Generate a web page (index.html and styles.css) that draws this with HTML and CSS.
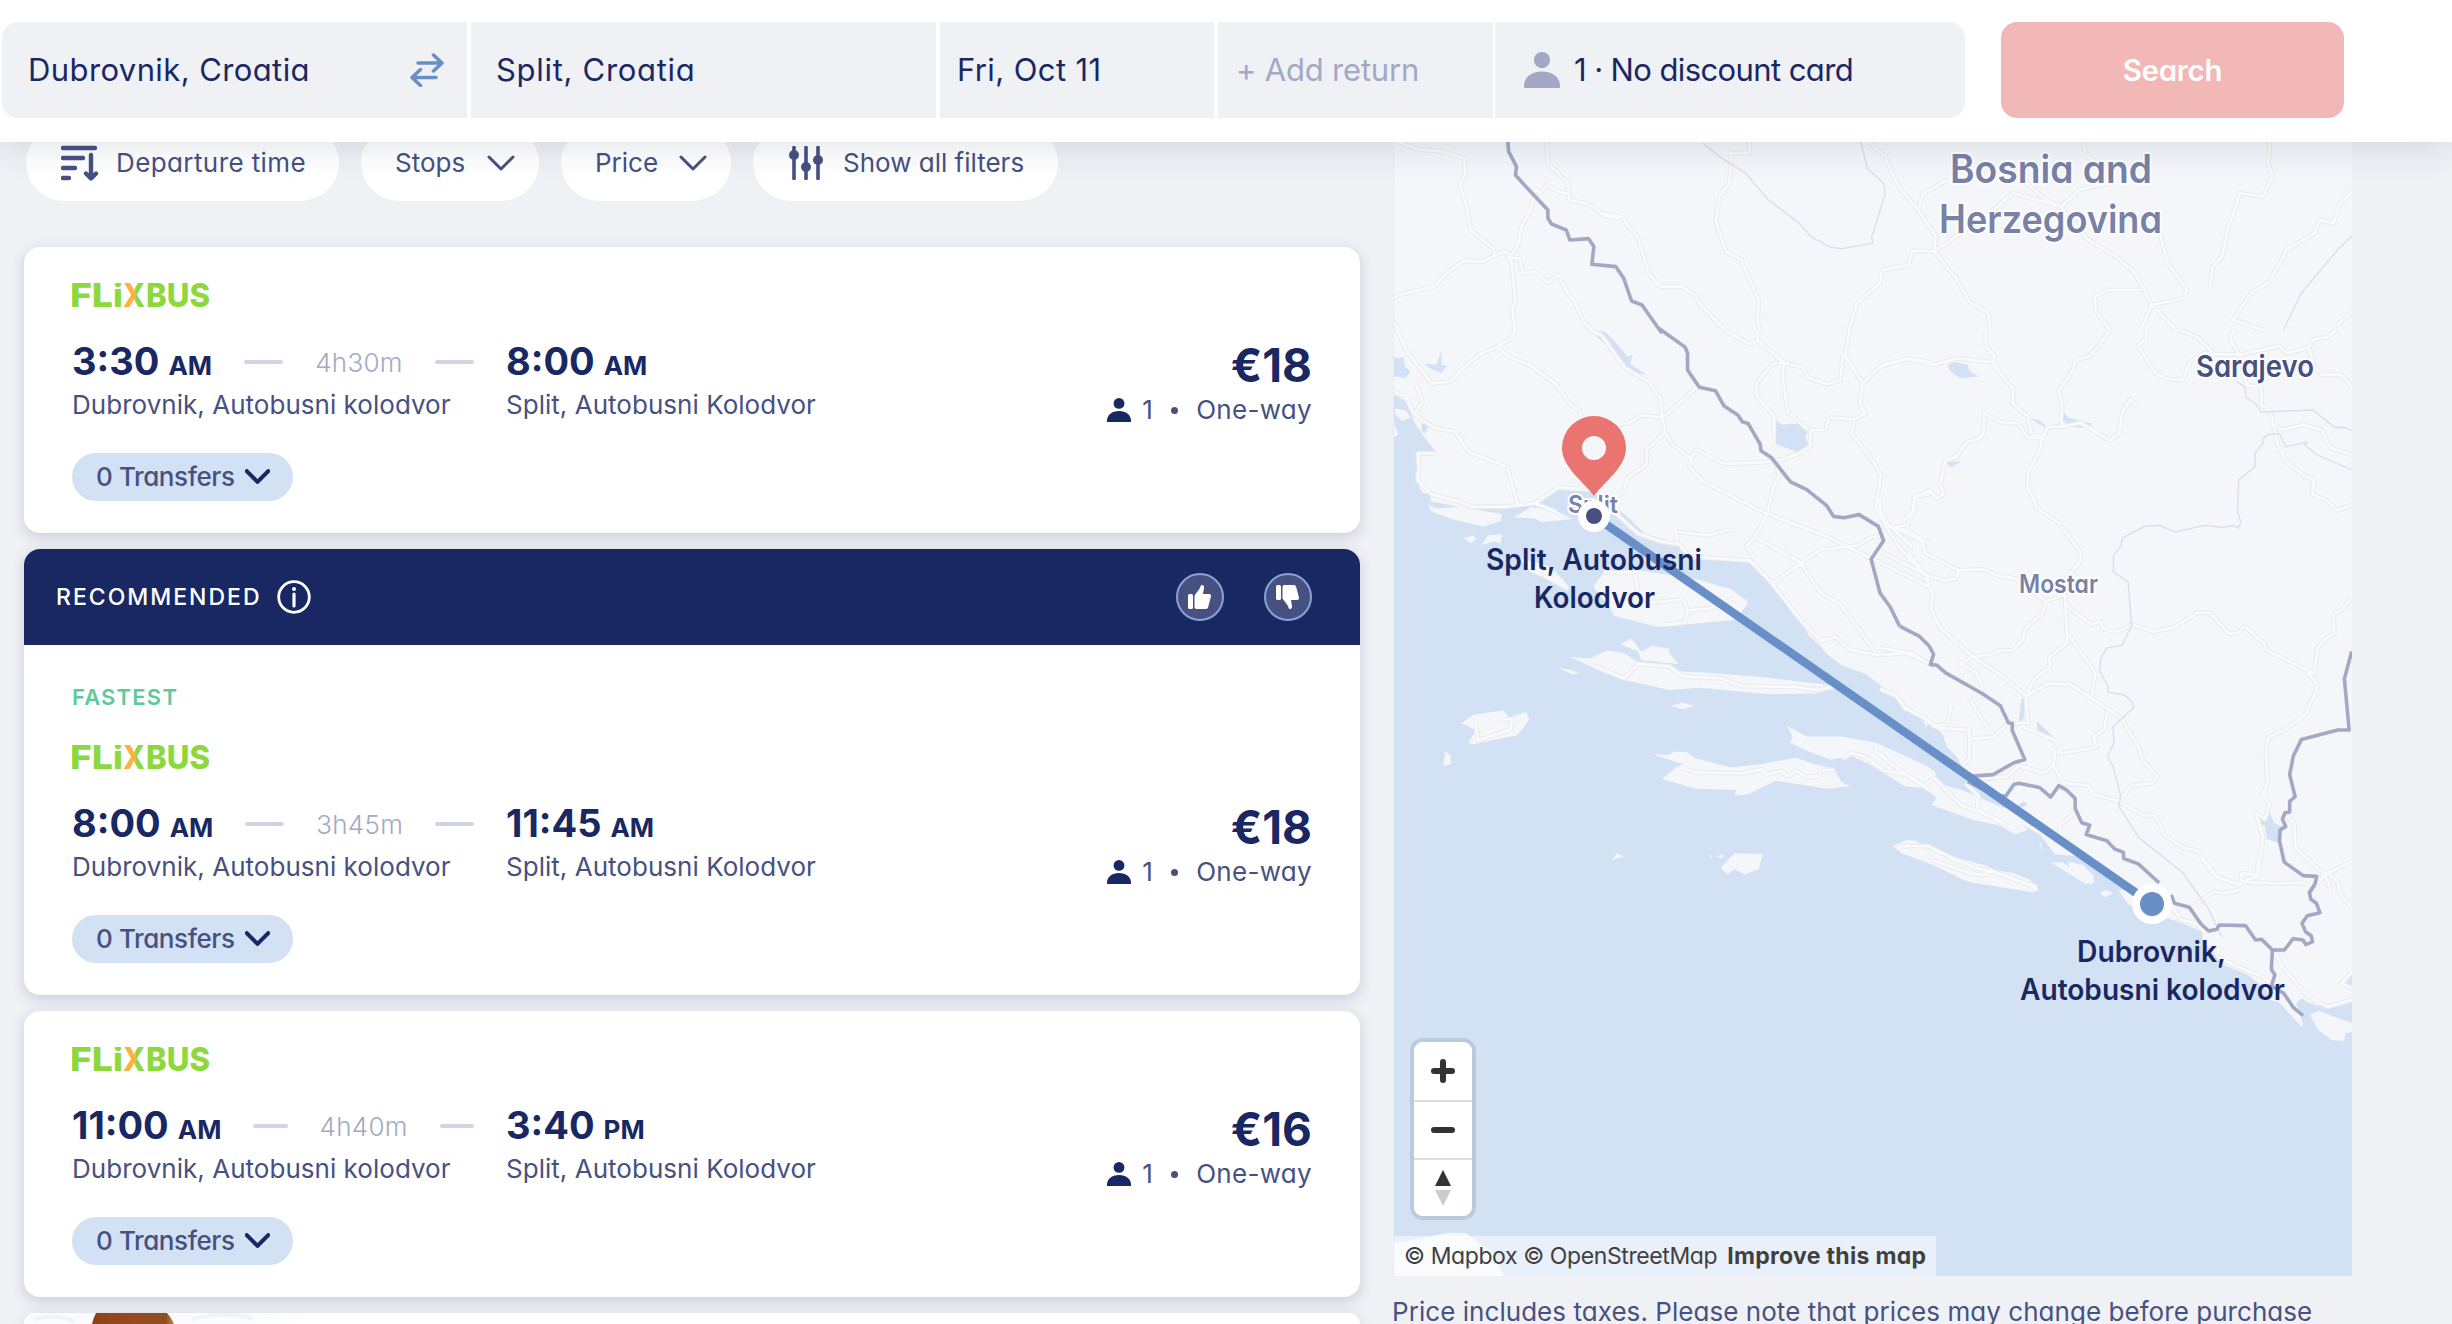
FILE: index.html
```html
<!DOCTYPE html>
<html lang="en">
<head>
<meta charset="utf-8">
<title>Dubrovnik to Split</title>
<link rel="stylesheet" href="styles.css">
</head>
<body>
<svg class="sprite" width="0" height="0" aria-hidden="true">
  <defs>
    <linearGradient id="x-fill" x1="0" x2="1" y1="0" y2="0">
      <stop offset=".58" stop-color="#fbb040"/><stop offset=".58" stop-color="#8dd83c"/>
    </linearGradient>
    <symbol id="flixbus" viewBox="0 0 137 24">
      <g font-family="Inter, sans-serif" font-weight="800" font-size="33" fill="#8dd83c">
        <text x="-2" y="24" textLength="43" lengthAdjust="spacingAndGlyphs">FL</text>
        <text x="41" y="24" textLength="10" lengthAdjust="spacingAndGlyphs">i</text>
        <text x="51" y="24" textLength="22" lengthAdjust="spacingAndGlyphs" fill="url(#x-fill)">X</text>
        <text x="74" y="24" textLength="64" lengthAdjust="spacingAndGlyphs">BUS</text>
      </g>
    </symbol>
    <symbol id="person" viewBox="0 0 24 24">
      <circle cx="12" cy="5.4" r="5.4"/><path d="M0 24v-1.500C0 17 5 13 12 13s12 4 12 9.500V24z"/>
    </symbol>
    <symbol id="chevron" viewBox="0 0 28 16"><path d="M2 2l12 12L26 2" fill="none" stroke="currentColor" stroke-linecap="round" stroke-linejoin="round"/></symbol>
    <symbol id="thumb" viewBox="0 0 24 24">
      <rect x="0" y="9" width="5" height="15" rx="1.500"/>
      <path d="M6.500 10.500 12 3c.5-1.500.6-3 2-3 1.800 0 2.300 1.600 1.900 3.500L15 9h6c1.600 0 2.300 1.200 1.900 2.700l-2.700 10.200C19.800 23.400 19 24 17.600 24H8.500c-1.200 0-2-.8-2-2z"/>
    </symbol>
  </defs>
</svg>

<header class="searchbar">
  <div class="field field-from"><span>Dubrovnik, Croatia</span>
    <svg class="swap" viewBox="0 0 34 34"><path d="M8 10h24M23.500 2l8.500 8-8.500 8M26 24.500H2M10.500 16.500l-8.500 8 8.500 8"/></svg>
  </div>
  <div class="field field-to"><span>Split, Croatia</span></div>
  <div class="field field-date"><span>Fri, Oct 11</span></div>
  <div class="field field-return"><span>+ Add return</span></div>
  <div class="field field-pax"><svg class="pax-icon"><use href="#person"/></svg><span>1 · No discount card</span></div>
  <button class="search">Search</button>
</header>

<main class="page">
  <section class="results">
    <nav class="filters">
      <div class="chip chip-sort">
        <svg class="sort-icon" viewBox="0 0 38 36"><path d="M2 3h32M2 13h20M2 23h12M2 33h6M30 10v23M25 28.500l5 5 5-5"/></svg>
        <span>Departure time</span>
      </div>
      <div class="chip chip-stops"><span>Stops</span><svg class="chip-chevron"><use href="#chevron"/></svg></div>
      <div class="chip chip-price"><span>Price</span><svg class="chip-chevron"><use href="#chevron"/></svg></div>
      <div class="chip chip-all">
        <svg class="tune-icon" viewBox="0 0 34 34"><path d="M5 1.500v31M17 1.500v31M29 1.500v31"/><circle cx="5" cy="9" r="5"/><circle cx="17" cy="21" r="5"/><circle cx="29" cy="14" r="5"/></svg>
        <span>Show all filters</span>
      </div>
    </nav>

    <article class="card">
      <div class="card-body">
        <svg class="logo"><use href="#flixbus"/></svg>
        <div class="trip">
          <div class="leg leg-out">
            <div class="timeline"><span class="time">3:30 <small>AM</small></span><i class="dash"></i><span class="duration">4h30m</span><i class="dash"></i></div>
            <div class="station">Dubrovnik, Autobusni kolodvor</div>
          </div>
          <div class="leg">
            <div class="timeline"><span class="time">8:00 <small>AM</small></span></div>
            <div class="station">Split, Autobusni Kolodvor</div>
          </div>
          <div class="fare">
            <div class="price">€18</div>
            <div class="kind"><svg class="kind-icon"><use href="#person"/></svg><span class="count">1</span><i class="bullet"></i><span>One-way</span></div>
          </div>
        </div>
        <button class="transfers"><span>0 Transfers</span><svg class="pill-chevron"><use href="#chevron"/></svg></button>
      </div>
    </article>

    <article class="card">
      <div class="ribbon">
        <span>RECOMMENDED</span>
        <svg class="info" viewBox="0 0 34 34"><circle cx="17" cy="17" r="15.300" fill="none" stroke="#fff" stroke-width="2.800"/><path d="M17 14v12" stroke="#fff" stroke-width="3.200" stroke-linecap="round"/><circle cx="17" cy="9" r="2" fill="#fff"/></svg>
        <div class="votes">
          <span class="vote"><svg><use href="#thumb"/></svg></span>
          <span class="vote vote-down"><svg><use href="#thumb"/></svg></span>
        </div>
      </div>
      <div class="card-body card-body-tagged">
        <div class="tag">FASTEST</div>
        <svg class="logo"><use href="#flixbus"/></svg>
        <div class="trip">
          <div class="leg leg-out">
            <div class="timeline"><span class="time">8:00 <small>AM</small></span><i class="dash"></i><span class="duration">3h45m</span><i class="dash"></i></div>
            <div class="station">Dubrovnik, Autobusni kolodvor</div>
          </div>
          <div class="leg">
            <div class="timeline"><span class="time">11:45 <small>AM</small></span></div>
            <div class="station">Split, Autobusni Kolodvor</div>
          </div>
          <div class="fare">
            <div class="price">€18</div>
            <div class="kind"><svg class="kind-icon"><use href="#person"/></svg><span class="count">1</span><i class="bullet"></i><span>One-way</span></div>
          </div>
        </div>
        <button class="transfers"><span>0 Transfers</span><svg class="pill-chevron"><use href="#chevron"/></svg></button>
      </div>
    </article>

    <article class="card">
      <div class="card-body">
        <svg class="logo"><use href="#flixbus"/></svg>
        <div class="trip">
          <div class="leg leg-out">
            <div class="timeline"><span class="time">11:00 <small>AM</small></span><i class="dash"></i><span class="duration">4h40m</span><i class="dash"></i></div>
            <div class="station">Dubrovnik, Autobusni kolodvor</div>
          </div>
          <div class="leg">
            <div class="timeline"><span class="time">3:40 <small>PM</small></span></div>
            <div class="station">Split, Autobusni Kolodvor</div>
          </div>
          <div class="fare">
            <div class="price">€16</div>
            <div class="kind"><svg class="kind-icon"><use href="#person"/></svg><span class="count">1</span><i class="bullet"></i><span>One-way</span></div>
          </div>
        </div>
        <button class="transfers"><span>0 Transfers</span><svg class="pill-chevron"><use href="#chevron"/></svg></button>
      </div>
    </article>

    <article class="card promo">
      <svg class="promo-photo" viewBox="0 0 278 11">
        <defs><linearGradient id="hair" x1="0" x2="1"><stop offset="0" stop-color="#8f4214"/><stop offset=".5" stop-color="#984a1d"/><stop offset=".9" stop-color="#8d4f20"/><stop offset="1" stop-color="#b98a4d"/></linearGradient></defs>
        <path d="M10 6q20-6 40 2M168 6q30-8 60-1" stroke="#f1f3f6" stroke-width="4" fill="none"/>
        <path d="M72 0Q69 6 68 11H150Q147 4 143 0z" fill="url(#hair)"/>
      </svg>
    </article>
  </section>

  <aside class="side">
    <div class="map">
      <svg class="map-canvas" viewBox="1393 142 959 1134" width="959" height="1134">
        <defs>
          <g id="roads">
            <g transform="scale(.3333) translate(2400 0) scale(1.569 1)">
              <path d="M1145 426L1180 448 1230 455 1270 475 1273 515 1262 555 1275 620 1282 690 1325 745 1330 765 1305 785 1270 782 1240 815 1212 860 1145 885 1132 900"/>
              <path d="M1428 426L1430 490 1468 548 1472 600 1508 612 1540 648 1568 655"/>
              <path d="M1405 565L1400 620 1380 680 1372 740 1355 775 1376 775 1383 820 1405 815 1430 848 1450 825 1470 885 1480 900 1500 970 1515 990"/>
              <path d="M1330 765L1350 755 1360 780 1368 900 1362 930 1368 1000"/><path d="M1405 565L1415 580 1428 555 1450 575 1470 582"/>
              <path d="M1132 960L1145 990"/>
            </g>
            <g transform="translate(1600 0) scale(.5434 .3333)">
              <path d="M0 640L40 650 70 715 90 820 110 860 150 860 175 885 185 915 230 990"/>
              <path d="M275 426V460H242L238 550 220 590 213 665 232 755 260 780 292 900 290 970 295 990"/>
              <path d="M495 426L525 470 540 530 550 560 585 630 618 710 615 755"/>
              <path d="M585 630L595 580 640 540"/>
              <path d="M890 426L895 470 930 500 935 550 880 570 870 590 848 620 760 580 720 635 615 755 575 752 568 795 520 810 515 850 473 910 458 990"/>
              <path d="M780 540L820 600 848 620 895 715 950 770 985 820 1015 915 1060 990"/>
              <path d="M615 755L655 835 680 905 715 940 718 990"/>
              <path d="M995 870H935L910 890 912 930 938 990"/>
              <path d="M1232 426L1230 490 1238 530 1220 590 1178 580 1155 690 1145 770 1128 800 1122 870M1030 700L1045 790 1080 870 1075 895 1015 915 998 980"/>
              <path d="M1384 575L1360 615 1350 670 1325 660 1315 700 1262 750 1258 770 1230 850 1200 875 1165 960 1220 990"/>
              <path d="M1384 935L1360 970 1362 990"/>
            </g>
            <g transform="translate(1390 330) scale(.3444 .3571)">
              <path d="M20 0L55 70 90 110 120 150 175 145 215 105 260 68 310 48 350 25 365 0M310 48L350 78 400 95 480 150 525 210 550 225 555 245"/>
              <path d="M12 175L45 185 70 235 130 275 190 285 225 340 340 383 372 490"/><path d="M70 235L95 200 75 150M205 300L215 285"/>
              <path d="M580 0L615 15 680 105 750 145 785 190 790 245 800 285 745 335 745 375 690 415 680 450 640 480"/>
              <path d="M660 265L690 262 730 238 790 245 835 210 885 165"/>
              <path d="M800 285L820 320 875 360 870 385 910 425 1095 515 1260 575 1400 640 1568 720"/>
              <path d="M875 360L890 335 970 375 1090 370 1140 362 1190 345 1220 325 1222 280 1265 280 1275 245 1350 250 1380 235 1365 205 1372 150 1320 70 1335 0"/>
              <path d="M970 0L1045 40 1068 30 1145 92 1110 95 1065 150 1065 185 1115 240V300M1068 0V30M1145 92L1200 105 1215 135 1270 152 1308 140 1315 70M1372 150L1430 97 1505 80 1568 90"/>
              <path d="M1145 92L1140 130 1155 230 1215 280M1350 250L1340 290 1405 370 1425 410 1410 495 1440 550 1480 610 1568 700M1440 550L1500 560 1568 600"/>
              <path d="M1568 460L1525 465 1518 505 1495 530"/>
              <path d="M1120 370L1130 410 1115 435 1095 515 1060 580 1035 605 1060 640"/><path d="M830 565L925 575 985 560M830 565L835 595 870 635 1045 645 1110 710 1190 810 1250 870 1295 860 1335 895 1410 910 1500 905 1568 935"/>
              <path d="M1110 710L1190 655 1250 615 1360 603 1400 580 1440 575M1060 580L1190 650 1250 735 1310 770 1385 870 1410 905"/>
              <path d="M80 345H130M80 345L85 380 80 420 120 460 200 480 240 495 330 495 420 485 490 440 550 445M420 485L485 510"/>
              <path d="M640 500L720 570 790 593 835 600"/>
              <path d="M620 680L710 678 720 735M740 765L850 755 865 785 855 820 795 825M865 785L930 780 1000 750"/>
              <path d="M590 940L680 975 720 935 810 942 850 970 960 975 1020 997 1180 1000 1240 1008 1310 995"/>
              <path d="M250 1110L255 1150 350 1118 355 1090 325 1090"/>
              <path d="M850 1225L880 1238 1020 1242 1080 1230 1090 1245 1140 1235 1155 1250 1180 1235 1210 1252 1245 1250 1250 1235 1290 1230"/>
              <path d="M1315 1200L1340 1185 1380 1195 1435 1235 1500 1245 1568 1290M1410 1158V1180L1440 1200"/>
            </g>
            <g transform="translate(1880 330) scale(.3648 .3571)">
              <path d="M0 103L75 80 150 97 210 80 310 90 315 75 290 45V0M310 95L365 165V208L405 240 415 290 445 303 460 272 505 270 550 260 630 310 655 290 665 230 685 195 705 210"/>
              <path d="M630 0L600 45 572 75 535 85 530 110 490 170 500 215 495 255 510 270"/>
              <path d="M285 232L330 258 378 262 405 300 445 303 440 335 405 400V440L432 500 490 540 552 625 545 655 505 700 512 850"/>
              <path d="M285 232L285 280 275 303 235 315 210 355 180 365 165 430 175 460 157 470 135 450 93 470 95 500 75 545 40 553"/>
              <path d="M0 470V500L20 540 85 605 80 630 125 685 178 703 210 695 215 673 280 670 330 690 370 695 455 760 510 740M0 620L125 685M40 553L115 590 125 625 215 673"/>
              <path d="M125 690L145 740 140 780 165 835 255 915 330 965 400 1025 460 990 520 992 580 1030 590 960 515 850 510 880 465 915V945L425 975 400 1025 405 1100 350 1103 310 1140 250 1145"/>
              <path d="M455 760L445 795 400 835 390 870 365 897 330 898 300 910 255 915 220 935 265 960 280 1000"/>
              <path d="M512 770L540 795 580 825 605 815 610 835 645 847 690 825 750 845 805 833 870 792H905L955 850 980 850 1000 830 1055 880 1060 897 1190 962 1200 890 1220 865 1245 850 1243 795 1270 780 1293 750"/>
              <path d="M1170 955L1200 997 1168 1075 1110 1120 1065 1140 1058 1180 1062 1265 1050 1300 1068 1330 1055 1370 1030 1350 1050 1420 1035 1530 990 1545"/>
              <path d="M580 1030L625 1062 615 1118 585 1140 595 1168 500 1185 480 1180 475 1220 450 1240 380 1220 350 1250 260 1260"/>
              <path d="M625 1062L660 1085 710 1170 720 1205 760 1250 745 1270 690 1275 655 1320 585 1300 570 1275 505 1270 475 1220M390 1110L480 1150 500 1185"/>
              <path d="M655 1320L720 1358 755 1360 780 1415 830 1450 870 1458 920 1530 985 1555M990 1545L1080 1550 1160 1548"/>
              <path d="M730 0V20L708 45 755 120 785 137 830 140 850 90 890 65 985 70 1095 45 1115 65 1175 50 1190 25 1225 20 1250 0M820 0L870 20 920 70M970 0L960 25 985 70 1005 155 1045 160V210L1070 225 1090 320 1115 370 1165 410 1190 420 1185 460 1220 475 1255 505 1293 490M1175 50L1190 100 1210 125 1265 125 1293 160"/>
              <path d="M1085 270L1105 280 1160 265 1210 280 1235 330 1293 350M1115 1360L1135 1380 1140 1450 1190 1500 1220 1525 1293 1488M1220 1525L1195 1555M1220 1525L1235 1568"/>
              <path d="M0 890L85 905 135 935M0 1005L45 1025 70 1060 120 1085 150 1110 185 1105 195 1050M160 1115L245 1120V1200L230 1215M245 1025L260 1060 300 1120M0 1190L50 1230 120 1275 150 1255 220 1330 300 1360 340 1385"/>
              <path d="M235 1270L270 1305 265 1345 330 1375M540 1345L515 1370 495 1380 490 1410M60 1445H130L200 1480 260 1505 330 1525 430 1560"/>
            </g>
            <g transform="translate(1900 860) scale(.352 .3333)">
              <path d="M90 0L200 40 240 45 255 30 370 75 390 90M860 0L900 50 965 75 970 40 1015 45 1018 0M840 135L890 95 920 100 965 90"/>
              <path d="M1215 35L1245 70 1250 100 1284 145M1065 275L1085 320 1160 410 1215 440 1284 420M1284 335L1255 370 1284 385M900 290L960 320 1030 350 1065 385M780 150L800 180 840 190 860 210"/>
            </g>
          </g>
        </defs>
        <rect x="1393" y="142" width="959" height="1134" fill="#f4f6fa"/>
        <g fill="#d2e1f3">
          <g transform="translate(1390 330) scale(.3444 .3571)">
            <path d="M0 172L12 178 45 200 62 235 72 262 100 300 134 342 76 342 85 380 78 420 92 455 115 460 120 480 200 495 240 500 290 488 345 498 420 483 480 448 550 450 592 455 680 515 740 570 835 597 870 640 1040 648 1110 710 1150 770 1195 815 1215 855 1255 890 1265 905 1310 938 1385 965 1430 1000 1480 1030 1500 1065 1555 1118 1568 1090V2700H0z"/>
            <path d="M0 70L25 80 38 75 45 105 60 115 45 135 20 130 0 138zM100 95L135 97 148 60 150 97 165 100 150 120 120 110zM580 0L625 5 660 40 690 75 705 68 697 95 745 125 700 120 670 80zM1120 250L1135 265 1190 262 1218 278 1205 300 1220 330 1185 343 1150 330 1120 320z"/>
            <path d="M92 262l20 3-8 25-12-8z"/>
          </g>
          <g transform="translate(1880 330) scale(.3648 .3571)">
            <path d="M0 1000L40 1020 70 1065 110 1080 133 1125V1085L145 1110 170 1130 185 1170 210 1195 240 1250 300 1290 365 1340 395 1320 405 1330 370 1345 330 1335 230 1290 160 1270 150 1235 0 1162z"/>
            <path d="M0 1238L70 1265 100 1285 120 1280 155 1310 140 1330 250 1370 330 1388 370 1412 405 1400 435 1430 450 1475 440 1435 390 1385 440 1415 480 1468 560 1475 610 1520 690 1568H0z"/>
            <path d="M185 97L205 90 240 97 245 115 270 130 220 135 195 118zM408 245L440 255 455 270 495 262 500 225 515 245 580 262 575 275 500 270 460 278zM180 370L222 368 195 385zM430 1095L485 1150 432 1130zM388 1035L400 1030 395 1085 380 1100zM1035 1350L1055 1370 1065 1345 1080 1380 1100 1390 1095 1438 1060 1425 1055 1390 1035 1380z"/>
          </g>
          <g transform="translate(1900 860) scale(.352 .3333)">
            <path d="M0 0H530L600 60 650 135 760 175 810 193 858 215 860 240 900 290 910 310 990 345 1045 395 1050 420 1075 425 1145 505 1140 470 1125 430 1140 415 1165 430 1215 445 1284 425V1250H0z"/>
            <path d="M1284 345L1265 370 1284 380z"/>
          </g>
        </g>
        <g fill="#f4f6fa">
          <g transform="translate(1390 330) scale(.3444 .3571)">
            <path d="M15 220L45 225 60 245 35 255 15 235zM12 262l12 30-12 8zM110 490L140 500 200 495 325 515 322 535 270 550 180 530 120 508zM360 525L410 495 490 510 530 530 440 538 420 528zM215 583L240 575 250 585 235 597zM265 603L285 575 325 572 322 598 300 592z"/>
            <path d="M375 640L420 650 470 665 520 720 515 730 440 690 410 680zM590 720L620 680 720 672 800 685 900 700 950 715 990 725 1040 762 1030 778 1000 812 780 832 650 800 640 780z"/>
            <path d="M520 915L580 920 630 897 680 905 720 930 830 955 920 960 1080 972 1310 998 1240 1018 1100 1020 900 1002 810 1008 680 980 590 945zM670 880L700 863 730 900 760 885 810 892 812 905 838 935 730 925 720 900zM487 945L515 950 550 960 530 965z"/>
            <path d="M815 1052L850 1043 883 1053 850 1062zM207 1102L240 1078 330 1065 345 1085 395 1070 405 1090 370 1135 240 1160 228 1155 250 1120zM155 1222L160 1180 175 1190 177 1215zM760 1187L810 1190 825 1180 860 1182 890 1200 990 1225 1080 1215 1180 1198 1220 1212 1290 1230 1310 1265 1335 1278 1270 1285 1120 1262 1040 1300 1000 1305 1005 1288 890 1285 790 1258 830 1225 850 1215z"/>
            <path d="M1152 1108L1175 1120 1210 1138 1310 1138 1410 1155 1568 1225V1285L1495 1278 1390 1215 1340 1193 1280 1203 1215 1180 1160 1155 1170 1140zM960 1505L1000 1465 1083 1468 1070 1510 1030 1525 1000 1510 980 1525zM930 1465l6 10-3 10zM947 1475l18-8 3 12zM642 1485L660 1465 680 1475z"/>
          </g>
          <g transform="translate(1880 330) scale(.3648 .3571)">
            <path d="M35 1445L60 1465 150 1500 240 1545 420 1575 430 1560 290 1500 130 1455 100 1430 75 1428zM470 1492L500 1490 540 1520 515 1500 530 1490 590 1545 565 1552z"/>
          </g>
          <g transform="translate(1900 860) scale(.352 .3333)">
            <path d="M60-10L240 15 260 30 320 38 370 60 395 92 330 75 220 45 100 12zM475 5L520 15 552 50 545 75 500 40zM432 8L460 20 480 36zM568 98L585 90 605 100 583 112zM632 110L655 120 650 132zM1165 465L1190 453 1284 490V515L1265 520 1262 543 1225 540 1187 508z"/>
          </g>
          <g transform="translate(1390 860) scale(.3571 .3333)"><path d="M8 1150L90 1135 160 1118 215 1120 250 1150 290 1180 320 1250H8z"/></g>
        </g>
        <use href="#roads" class="road-casing"/>
        <use href="#roads" class="road-fill"/>
        <g class="region">
          <g transform="translate(1600 0) scale(.5434 .3333)">
            <path d="M190 430L220 470 268 520 310 600 363 665 390 712 425 742 445 746 502 730 500 712 525 580 522 550 492 505 480 426M1384 708L1360 745 1290 880 1258 990"/>
          </g>
          <g transform="translate(1880 330) scale(.3648 .3571)">
            <path d="M978 145L1002 160V188L1028 205 1045 230 1187 224 1247 273H1275L1293 282M1293 392L1195 348 1165 322 1170 314 1112 327 1095 290 1065 293 1048 305 1050 317 1028 345V383L983 420 980 510 990 540 980 555 970 547 940 553 890 547 810 565 765 547 725 550 665 582 660 605 640 632V678L680 705 690 828 663 883 622 890 605 920 602 955 625 998V1015L670 1022 690 1040 695 1058 638 1112 642 1155 624 1195 638 1220 660 1305 655 1335 710 1422 830 1520 900 1620 937 1700"/>
          </g>
        </g>
        <g class="border">
          <g transform="translate(800 0) scale(.523 .3333)"><path d="M1352 400L1355 455 1370 500 1368 525 1385 555 1430 630V655L1437 672 1465 690 1472 720 1508 716 1518 740 1514 793 1560 800 1575 835 1590 903 1610 915 1648 1000"/></g>
          <g transform="translate(1390 330) scale(.3444 .3571)"><path d="M780 -5L857 48 864 65V112L898 160 945 170 970 213 1010 238 1023 257 1040 262 1075 320 1077 338 1107 357 1163 425 1210 447 1268 492 1288 522 1318 526 1362 517 1418 550 1433 590 1397 642 1423 737 1452 775 1480 830"/></g>
          <g transform="translate(1880 330) scale(.3648 .3571)">
            <path d="M55 830L107 857 135 885 147 908 138 937 155 938 180 960 280 1018 330 1052 352 1100 363 1102 362 1120 397 1203 367 1212 310 1245 240 1250M240 1265L320 1305H345L367 1273 380 1269 437 1281 468 1308 490 1276 510 1287 535 1312V1340L553 1380 575 1387 565 1413 622 1430 643 1453 667 1463 668 1480 708 1495 765 1548M1293 900L1273 977 1286 1120H1255L1155 1147 1133 1193 1123 1245 1138 1307 1123 1320V1350L1110 1352 1103 1370 1112 1390 1097 1400 1095 1430 1108 1490 1160 1528 1197 1530 1193 1550 1178 1575"/>
          </g>
          <g transform="translate(1900 860) scale(.352 .3333)"><path d="M770 105L780 130 822 142 855 192 877 213 900 208 907 195 982 197 1010 240 1027 238 1058 270H1092L1117 236 1145 240 1153 254 1172 245 1168 227 1152 215 1142 190 1157 167 1193 158 1183 130 1167 118 1163 97 1178 75M1058 270L1055 328 1065 345 1055 378 1090 400 1118 443 1145 467"/></g>
        </g>
        <g class="place">
          <text x="1950" y="183" font-size="39" textLength="202" lengthAdjust="spacingAndGlyphs">Bosnia and</text>
          <text x="1939" y="233" font-size="39" textLength="223" lengthAdjust="spacingAndGlyphs">Herzegovina</text>
          <text x="2196" y="377" font-size="30" textLength="118" lengthAdjust="spacingAndGlyphs" fill="#465182">Sarajevo</text>
          <text x="2019" y="593" font-size="25" textLength="79" lengthAdjust="spacingAndGlyphs">Mostar</text>
          <text x="1568" y="513" font-size="24" textLength="50" lengthAdjust="spacingAndGlyphs">Split</text>
        </g>
        <path d="M1594 516L2152 904" stroke="#688fc7" stroke-width="8.500"/>
        <circle cx="1594" cy="516" r="16" fill="#fff"/><circle cx="1594" cy="516" r="8" fill="#465182"/>
        <circle cx="2152" cy="904" r="20" fill="#fff"/><circle cx="2152" cy="904" r="12" fill="#688fc7"/>
        <path fill="#e97470" fill-rule="evenodd" d="M1594 496C1582 480 1562 467 1562 448a32 32 0 0 1 64 0C1626 467 1606 480 1594 496zM1594 436a12 12 0 1 0 0 24 12 12 0 0 0 0-24z"/>
        <g class="stop-label">
          <text x="1486" y="570" textLength="216" lengthAdjust="spacingAndGlyphs">Split, Autobusni</text>
          <text x="1534" y="608" textLength="121" lengthAdjust="spacingAndGlyphs">Kolodvor</text>
          <text x="2077" y="962" textLength="149" lengthAdjust="spacingAndGlyphs">Dubrovnik,</text>
          <text x="2020" y="1000" textLength="265" lengthAdjust="spacingAndGlyphs">Autobusni kolodvor</text>
        </g>
      </svg>
      <div class="zoom">
        <button><svg viewBox="0 0 24 24"><path d="M12 3v18M3 12h18" stroke="#333" stroke-width="6" stroke-linecap="round"/></svg></button>
        <button><svg viewBox="0 0 24 24"><path d="M3 12h18" stroke="#333" stroke-width="6" stroke-linecap="round"/></svg></button>
        <button><svg class="compass" viewBox="0 0 16 36"><path d="M0 16L8 0l8 16z" fill="#333"/><path d="M0 20l8 16 8-16z" fill="#ccc"/></svg></button>
      </div>
      <div class="credits"><span>© Mapbox</span><span>© OpenStreetMap</span><b>Improve this map</b></div>
    </div>
    <p class="note">Price includes taxes. Please note that prices may change before purchase</p>
  </aside>
</main>
</body>
</html>
```
FILE: styles.css
```css
* { box-sizing: border-box; }

body {
  margin: 0;
  height: 1324px;
  overflow: hidden;
  background: #f0f1f5;
  color: #192863;
  font-family: Inter, "Liberation Sans", sans-serif;
  font-feature-settings: "cv11";
  font-size: 26px;
  white-space: nowrap;
}

button { border: 0; padding: 0; font: inherit; color: inherit; }
svg { display: block; flex: none; }
.sprite { position: absolute; }

/* Search bar */
.searchbar {
  position: relative;
  z-index: 2;
  display: flex;
  gap: 4px;
  height: 142px;
  padding: 22px 0 24px 2px;
  background: #fff;
  box-shadow: 0 0 36px rgba(25, 40, 80, .17);
}
.field {
  display: flex;
  align-items: center;
  height: 96px;
  padding-bottom: 1px;
  background: #f0f1f5;
  font-size: 31px;
}
.field-from { width: 465px; padding: 0 23px 1px 26px; justify-content: space-between; border-radius: 16px 0 0 16px; letter-spacing: .4px; }
.field-to { width: 465px; padding-left: 25px; letter-spacing: .7px; }
.field-date { width: 274px; padding-left: 17px; letter-spacing: .4px; }
.field-return { width: 275px; padding-left: 18px; color: #a3a9c4; letter-spacing: -.2px; }
.field-pax { width: 470px; margin-left: -2px; padding-left: 29px; gap: 14px; border-radius: 0 16px 16px 0; letter-spacing: -.6px; }
.pax-icon { width: 36px; height: 36px; fill: #a3a9c4; }
.swap { width: 34px; height: 34px; fill: none; stroke: #688fc7; stroke-width: 3.500; stroke-linecap: round; stroke-linejoin: round; }
.search {
  width: 343px;
  height: 96px;
  margin-left: 32px;
  padding-bottom: 1px;
  border-radius: 16px;
  background: #f2b7b7;
  color: #fff;
  font-size: 29.500px;
  font-weight: 600;
  letter-spacing: -.3px;
}

/* Page columns */
.page { display: flex; gap: 32px; height: 1182px; }
.results { flex: none; display: flex; flex-direction: column; gap: 16px; width: 1361px; margin-top: -17px; padding-left: 24px; }
.side { flex: none; }

/* Filters */
.filters { display: flex; gap: 22px; margin: 0 0 30px 2px; color: #465182; }
.chip { display: flex; align-items: center; height: 76px; padding-bottom: 1px; border-radius: 38px; background: #fff; font-size: 26px; }
.chip-sort { width: 313px; padding-left: 35px; gap: 17px; letter-spacing: .4px; }
.chip-stops { width: 178px; padding-left: 34px; gap: 22px; }
.chip-price { width: 170px; padding-left: 34px; gap: 21px; }
.chip-all { width: 305px; padding-left: 36px; gap: 20px; }
.sort-icon { width: 38px; height: 36px; fill: none; stroke: #465182; stroke-width: 4.400; stroke-linecap: round; stroke-linejoin: round; }
.tune-icon { width: 34px; height: 34px; fill: #465182; stroke: #465182; stroke-width: 3.600; stroke-linecap: round; }
.tune-icon circle { stroke: none; }
.chip-chevron { width: 28px; height: 16px; stroke-width: 3; }

/* Trip cards */
.card { flex: none; width: 1336px; border-radius: 16px; background: #fff; box-shadow: 0 4px 14px rgba(25, 40, 99, .18); }
.card-body { padding: 36px 48px 32px; }
.card-body-tagged { padding-top: 40px; }
.tag { height: 24px; margin-bottom: 36px; line-height: 24px; font-size: 22px; font-weight: 600; letter-spacing: 1.200px; color: #5ec99c; }
.logo { width: 137px; height: 24px; overflow: visible; }
.trip { display: flex; height: 79px; margin-top: 34px; }
.leg { padding-top: 1px; }
.leg-out { width: 434px; padding-right: 32px; }
.timeline { display: flex; align-items: center; gap: 32px; height: 40px; }
.time { font-size: 38px; font-weight: 700; line-height: 40px; padding-top: 2px; }
.time small { font-size: 26px; }
.dash { flex: 1; height: 4px; border-radius: 2px; background: #d1d4e2; }
.duration { color: #a3a9c4; font-weight: 300; letter-spacing: .3px; }
.station { margin-top: 7px; line-height: 32px; color: #465182; letter-spacing: .03px; }
.fare { margin-left: auto; text-align: right; }
.price { font-size: 46px; font-weight: 700; line-height: 49px; }
.kind { display: flex; align-items: center; justify-content: flex-end; margin-top: 4px; line-height: 32px; color: #465182; letter-spacing: .3px; }
.kind-icon { width: 24px; height: 24px; margin-right: 11px; fill: #192863; }
.bullet { width: 7px; height: 7px; margin: 0 18px; border-radius: 50%; background: #465182; }
.transfers {
  display: flex;
  align-items: center;
  gap: 10px;
  width: 221px;
  height: 48px;
  margin-top: 33px;
  padding: 0 0 1px 24px;
  border-radius: 24px;
  background: #d2e1f3;
  color: #465182;
  font-weight: 500;
  letter-spacing: -.4px;
}
.pill-chevron { width: 25px; height: 15px; color: #192863; stroke-width: 4.600; }

.ribbon { display: flex; align-items: center; height: 96px; padding: 0 48px 0 32px; border-radius: 16px 16px 0 0; background: #192863; color: #fff; font-size: 23px; font-weight: 500; letter-spacing: 2px; }
.info { width: 34px; height: 34px; margin-left: 15px; }
.votes { display: flex; gap: 40px; margin-left: auto; }
.vote { display: flex; align-items: center; justify-content: center; width: 48px; height: 48px; border: 2px solid #85a5d6; border-radius: 50%; background: #465182; }
.vote svg { width: 24px; height: 24px; fill: #fff; }
.vote-down svg { transform: scaleY(-1); }

.promo { height: 11px; border-radius: 16px 16px 0 0; overflow: hidden; }
.promo-photo { width: 278px; height: 11px; background: linear-gradient(90deg, #fafbfc, #fbfcfd 80%, #fff); }

/* Map */
.map { position: relative; width: 959px; height: 1134px; border-left: 1px solid #ebebeb; }
.map-canvas { margin-left: -1px; clip-path: inset(0 0 0 1px); }
.map path { vector-effect: non-scaling-stroke; }
.road-casing { fill: none; stroke: #ececee; stroke-width: 5; stroke-linejoin: round; }
.road-fill { fill: none; stroke: #f9fafb; stroke-width: 2.600; stroke-linejoin: round; }
.region { fill: none; stroke: #dadce8; stroke-width: 1.300; }
.border { fill: none; stroke: #a3a9c4; stroke-width: 3.600; stroke-linejoin: round; }
.place { fill: #7882a6; font-weight: 600; stroke: #fff; stroke-width: 4; stroke-linejoin: round; paint-order: stroke; }
.stop-label { fill: #192863; font-size: 29.500px; font-weight: 600; }
.zoom { position: absolute; left: 16px; bottom: 56px; width: 66px; border: 4px solid #bccbdc; border-radius: 13px; background: #fff; overflow: hidden; }
.zoom button { display: flex; align-items: center; justify-content: center; width: 58px; height: 58px; background: #fff; }
.zoom button + button { border-top: 2px solid #ddd; }
.zoom svg { width: 24px; height: 24px; }
.zoom .compass { width: 16px; height: 36px; }
.credits { position: absolute; left: 0; bottom: 0; display: flex; align-items: center; gap: 6px; width: 542px; height: 40px; padding-left: 10px; background: rgba(255, 255, 255, .5); color: #404040; font-size: 23px; letter-spacing: -.4px; }
.credits b { margin-left: 4px; letter-spacing: .3px; }
.note { margin: 20px 0 0 -1px; height: 28px; line-height: 32px; font-size: 26px; letter-spacing: .05px; color: #465182; }
```
